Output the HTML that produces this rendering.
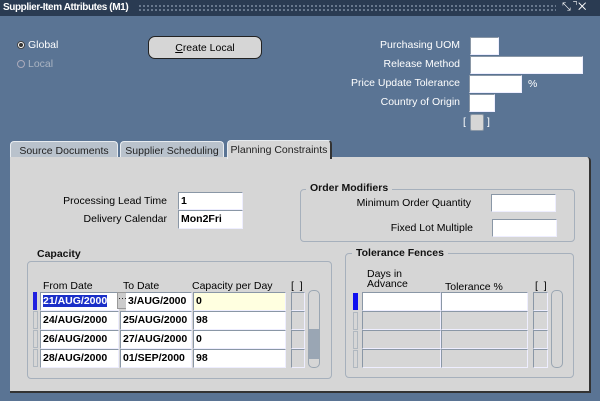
<!DOCTYPE html>
<html><head><style>
*{box-sizing:border-box;margin:0;padding:0}
body{width:600px;height:401px;overflow:hidden;background:#5a7494;font-family:"Liberation Sans",sans-serif;font-size:10.5px;position:relative}
.a{position:absolute}
.t{position:absolute;font-size:10.5px;white-space:nowrap}
.w{color:#fff}
.f{position:absolute;background:#fff;border-top:1px solid #8a97a6;border-left:1px solid #8a97a6;border-right:1px solid #eef;border-bottom:1px solid #eef;font-weight:bold;font-size:10.5px;padding:2px 0 0 2px;white-space:nowrap;overflow:hidden}
.g{background:#d6d6d6}
.box{position:absolute;border:1px solid #a6b0bc;border-radius:4px}
.bt{position:absolute;background:#d6d6d6;font-weight:bold;font-size:10.5px;padding:0 4px;color:#111}
.tab{position:absolute;background:#b9c2cc;border:1px solid #e8ecf0;border-bottom:none;border-radius:4px 4px 0 0;font-size:10.5px;text-align:center;padding-top:3px;color:#222}
.ind{position:absolute;background:#d6d6d6;border:1px solid #b0b8c0;width:5px}
.sb{position:absolute;background:#d6d6d6;border:1px solid #9aa6b2;border-radius:5px}
</style></head><body>
<div class="a" style="left:0;top:0;width:600px;height:16px;background:#2a3b52"></div>
<div class="a" style="left:138px;top:4px;width:418px;height:9px;background-image:radial-gradient(#6d7d92 1px,transparent 1.2px);background-size:4px 4px"></div>
<div class="t w" style="left:3px;top:2px;font-weight:bold;font-size:10px;letter-spacing:-0.4px">Supplier-Item Attributes (M1)</div>
<div class="t w" style="left:562px;top:1px;font-size:11px;letter-spacing:1px">⤡⌝✕</div>

<div class="a" style="left:17px;top:41px;width:8px;height:8px;border-radius:50%;background:#fff;border:1px solid #444"><div class="a" style="left:1px;top:1px;width:4px;height:4px;border-radius:50%;background:#333"></div></div>
<div class="t w" style="left:28px;top:39px">Global</div>
<div class="a" style="left:17px;top:60px;width:8px;height:8px;border-radius:50%;border:1px solid #aab"></div>
<div class="t" style="left:28px;top:58px;color:#aab4c2">Local</div>
<div class="a" style="left:148px;top:36px;width:114px;height:23px;background:#d6d6d6;border:1px solid #222;border-radius:7px;text-align:center;padding-top:5px;font-size:10.5px"><u>C</u>reate Local</div>

<div class="t w" style="right:140px;top:39px">Purchasing UOM</div>
<div class="t w" style="right:140px;top:58px">Release Method</div>
<div class="t w" style="right:140px;top:77px">Price Update Tolerance</div>
<div class="t w" style="right:140px;top:96px">Country of Origin</div>
<div class="f" style="left:470px;top:37px;width:29px;height:18px"></div>
<div class="f" style="left:470px;top:56px;width:113px;height:18px"></div>
<div class="f" style="left:469px;top:75px;width:53px;height:18px"></div>
<div class="t w" style="left:528px;top:78px">%</div>
<div class="f" style="left:469px;top:94px;width:26px;height:18px"></div>
<div class="t w" style="left:463px;top:116px">[</div>
<div class="a" style="left:470px;top:114px;width:14px;height:17px;background:#d6d6d6;border:1px solid #8a97a6;border-radius:2px"></div>
<div class="t w" style="left:487px;top:116px">]</div>

<div class="tab" style="left:10px;top:141px;width:108px;height:17px">Source Documents</div>
<div class="tab" style="left:120px;top:141px;width:104px;height:17px">Supplier Scheduling</div>
<div class="a" style="left:10px;top:157px;width:581px;height:236px;background:#d6d6d6;border-right:2px solid #333;border-bottom:2px solid #333;border-radius:0 4px 0 0"></div>
<div class="tab" style="left:227px;top:140px;width:105px;height:19px;background:#d6d6d6;border-right:2px solid #333">Planning Constraints</div>

<div class="t" style="right:433px;top:195px">Processing Lead Time</div>
<div class="t" style="right:433px;top:213px">Delivery Calendar</div>
<div class="f" style="left:178px;top:192px;width:65px;height:18px">1</div>
<div class="f" style="left:178px;top:210px;width:65px;height:19px">Mon2Fri</div>

<div class="box" style="left:300px;top:189px;width:275px;height:53px"></div>
<div class="bt" style="left:306px;top:182px">Order Modifiers</div>
<div class="t" style="right:129px;top:197px">Minimum Order Quantity</div>
<div class="t" style="right:127px;top:222px">Fixed Lot Multiple</div>
<div class="f" style="left:491px;top:194px;width:65px;height:18px"></div>
<div class="f" style="left:492px;top:219px;width:65px;height:18px"></div>

<div class="box" style="left:27px;top:261px;width:305px;height:118px"></div>
<div class="bt" style="left:33px;top:248px">Capacity</div>
<div class="t" style="left:43px;top:280px">From Date</div>
<div class="t" style="left:123px;top:280px">To Date</div>
<div class="t" style="left:192px;top:280px">Capacity per Day</div>
<div class="t" style="left:291px;top:280px">[ &nbsp;]</div>
<div class="ind" style="left:33px;top:292px;height:18px;background:#2020e0;border:none;width:4px"></div>
<div class="ind" style="left:33px;top:311px;height:18px"></div>
<div class="ind" style="left:33px;top:330px;height:18px"></div>
<div class="ind" style="left:33px;top:349px;height:18px"></div>
<div class="f" style="left:40px;top:292px;width:79px;height:19px"><span style="background:#1a2fc8;color:#fff">21/AUG/2000</span></div>
<div class="a" style="left:117px;top:292px;width:11px;height:17px;background:#ccc;border:1px solid #999;font-size:9px;text-align:center">···</div>
<div class="f" style="left:126px;top:292px;width:66px;height:19px;border-left:none">3/AUG/2000</div>
<div class="f" style="left:193px;top:292px;width:93px;height:19px;background:#ffffe0">0</div>
<div class="f" style="left:40px;top:311px;width:79px;height:19px">24/AUG/2000</div>
<div class="f" style="left:120px;top:311px;width:72px;height:19px">25/AUG/2000</div>
<div class="f" style="left:193px;top:311px;width:93px;height:19px">98</div>
<div class="f" style="left:40px;top:330px;width:79px;height:19px">26/AUG/2000</div>
<div class="f" style="left:120px;top:330px;width:72px;height:19px">27/AUG/2000</div>
<div class="f" style="left:193px;top:330px;width:93px;height:19px">0</div>
<div class="f" style="left:40px;top:349px;width:79px;height:19px">28/AUG/2000</div>
<div class="f" style="left:120px;top:349px;width:72px;height:19px">01/SEP/2000</div>
<div class="f" style="left:193px;top:349px;width:93px;height:19px">98</div>
<div class="f g" style="left:291px;top:292px;width:14px;height:19px"></div>
<div class="f g" style="left:291px;top:311px;width:14px;height:19px"></div>
<div class="f g" style="left:291px;top:330px;width:14px;height:19px"></div>
<div class="f g" style="left:291px;top:349px;width:14px;height:19px"></div>
<div class="sb" style="left:308px;top:290px;width:12px;height:78px"><div class="a" style="left:0;top:38px;width:10px;height:30px;background:#9aa6b4"></div></div>

<div class="box" style="left:345px;top:253px;width:229px;height:125px"></div>
<div class="bt" style="left:352px;top:247px">Tolerance Fences</div>
<div class="t" style="left:367px;top:269px;line-height:10px">Days in<br>Advance</div>
<div class="t" style="left:445px;top:281px">Tolerance %</div>
<div class="t" style="left:535px;top:280px">[ &nbsp;]</div>
<div class="ind" style="left:353px;top:293px;height:17px;background:#1010f0;border:none;width:5px"></div>
<div class="ind" style="left:353px;top:312px;height:18px"></div>
<div class="ind" style="left:353px;top:331px;height:18px"></div>
<div class="ind" style="left:353px;top:350px;height:18px"></div>
<div class="f" style="left:362px;top:292px;width:79px;height:19px"></div>
<div class="f" style="left:441px;top:292px;width:87px;height:19px"></div>
<div class="f g" style="left:362px;top:311px;width:79px;height:19px"></div>
<div class="f g" style="left:441px;top:311px;width:87px;height:19px"></div>
<div class="f g" style="left:362px;top:330px;width:79px;height:19px"></div>
<div class="f g" style="left:441px;top:330px;width:87px;height:19px"></div>
<div class="f g" style="left:362px;top:349px;width:79px;height:19px"></div>
<div class="f g" style="left:441px;top:349px;width:87px;height:19px"></div>
<div class="f g" style="left:533px;top:292px;width:15px;height:19px"></div>
<div class="f g" style="left:533px;top:311px;width:15px;height:19px"></div>
<div class="f g" style="left:533px;top:330px;width:15px;height:19px"></div>
<div class="f g" style="left:533px;top:349px;width:15px;height:19px"></div>
<div class="sb" style="left:551px;top:290px;width:12px;height:78px"></div>
</body></html>
